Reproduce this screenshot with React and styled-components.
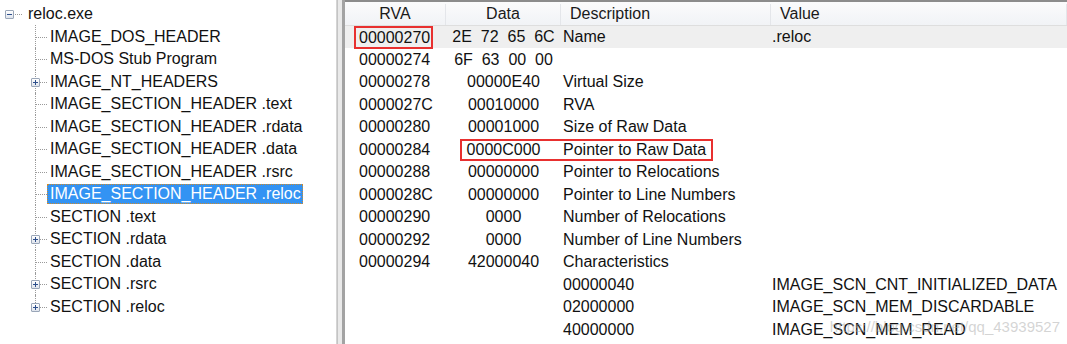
import React from "react";
import styled, { createGlobalStyle, css } from "styled-components";

const GlobalStyle = createGlobalStyle`
  html, body {
    margin: 0;
    padding: 0;
    background: #ffffff;
  }
  body {
    font-family: "Liberation Sans", Arial, sans-serif;
    font-size: 16px;
    color: #111;
  }
`;

const tree = [
  { label: "IMAGE_DOS_HEADER" },
  { label: "MS-DOS Stub Program" },
  { label: "IMAGE_NT_HEADERS", expandable: true },
  { label: "IMAGE_SECTION_HEADER .text" },
  { label: "IMAGE_SECTION_HEADER .rdata" },
  { label: "IMAGE_SECTION_HEADER .data" },
  { label: "IMAGE_SECTION_HEADER .rsrc" },
  { label: "IMAGE_SECTION_HEADER .reloc", selected: true },
  { label: "SECTION .text" },
  { label: "SECTION .rdata", expandable: true },
  { label: "SECTION .data" },
  { label: "SECTION .rsrc", expandable: true },
  { label: "SECTION .reloc", expandable: true },
];

const rows = [
  { rva: "00000270", data: "2E  72  65  6C", desc: "Name", value: ".reloc", current: true, mark: true },
  { rva: "00000274", data: "6F  63  00  00", desc: "", value: "" },
  { rva: "00000278", data: "00000E40", desc: "Virtual Size" },
  { rva: "0000027C", data: "00010000", desc: "RVA" },
  { rva: "00000280", data: "00001000", desc: "Size of Raw Data" },
  { rva: "00000284", data: "0000C000", desc: "Pointer to Raw Data" },
  { rva: "00000288", data: "00000000", desc: "Pointer to Relocations" },
  { rva: "0000028C", data: "00000000", desc: "Pointer to Line Numbers" },
  { rva: "00000290", data: "0000", desc: "Number of Relocations" },
  { rva: "00000292", data: "0000", desc: "Number of Line Numbers" },
  { rva: "00000294", data: "42000040", desc: "Characteristics" },
  { rva: "", data: "", desc: "00000040", value: "IMAGE_SCN_CNT_INITIALIZED_DATA" },
  { rva: "", data: "", desc: "02000000", value: "IMAGE_SCN_MEM_DISCARDABLE" },
  { rva: "", data: "", desc: "40000000", value: "IMAGE_SCN_MEM_READ" },
];

const ROW_H = 22.5;
const COLS = "101px 115px 210px 1fr";

const Window = styled.div`
  display: flex;
  height: 344px;
  width: 1067px;
  overflow: hidden;
  background: #fff;
`;

const TreePane = styled.div`
  width: 337px;
  flex: none;
  border-right: 1px solid #d4d4d4;
  padding: 2.75px 0 0 5px;
  box-sizing: border-box;
`;

const Splitter = styled.div`
  width: 8px;
  flex: none;
  background: #e9e9e9;
  border-left: 1px solid #c4c4c4;
  border-right: 3px solid #a3a3a3;
  box-sizing: border-box;
`;

const Row = styled.div`
  display: flex;
  align-items: center;
  height: ${ROW_H}px;
  white-space: nowrap;
`;

const ExpandBox = styled.span`
  width: 9px;
  height: 9px;
  box-sizing: border-box;
  border: 1px solid #9aa6b8;
  border-radius: 1px;
  background: linear-gradient(#ffffff, #dfe4ec);
  display: flex;
  align-items: center;
  justify-content: center;
  position: relative;
  flex: none;
  &::before {
    content: "";
    width: 5px;
    height: 1px;
    background: #2d4f8c;
  }
  ${(p) =>
    p.plus &&
    css`
      &::after {
        content: "";
        position: absolute;
        width: 1px;
        height: 5px;
        background: #2d4f8c;
      }
    `}
`;

const RootStub = styled.span`
  width: 7px;
  border-top: 1px dotted #9a9a9a;
  margin: 0 3px 0 1px;
`;

const Children = styled.div`
  margin-left: 25px;
`;

const Connector = styled.span`
  width: 17px;
  height: 100%;
  flex: none;
  position: relative;
  display: flex;
  align-items: center;
  &::before {
    content: "";
    position: absolute;
    left: 5px;
    top: 0;
    height: ${(p) => (p.last ? "50%" : "100%")};
    border-left: 1px dotted #9a9a9a;
  }
  &::after {
    content: "";
    position: absolute;
    left: 6px;
    width: 11px;
    top: 50%;
    border-top: 1px dotted #9a9a9a;
  }
  ${ExpandBox} {
    position: absolute;
    left: 1px;
    top: calc(50% - 4px);
    z-index: 1;
  }
`;

const Label = styled.span`
  padding: 1px 2px 1px 3px;
  line-height: 18px;
  ${(p) =>
    p.selected &&
    css`
      background: #3393f3;
      color: #fff;
      outline: 1px dotted #d08a2a;
      outline-offset: -1px;
    `}
`;

const TablePane = styled.div`
  flex: 1;
  display: flex;
  flex-direction: column;
  border-top: 2px solid #8c8c8c;
  position: relative;
`;

const Header = styled.div`
  display: grid;
  grid-template-columns: ${COLS};
  height: 23.75px;
  padding-top: 2px;
  background: linear-gradient(#fbfbfc, #f1f3f6);
  border-bottom: 1px solid #dedede;
  box-sizing: border-box;
`;

const HeadCell = styled.div`
  display: flex;
  align-items: center;
  justify-content: ${(p) => (p.center ? "center" : "flex-start")};
  padding-left: ${(p) => (p.center ? "0" : "9px")};
  border-right: 1px solid #e4e6ea;
  color: #1a1a1a;
`;

const DataRow = styled.div`
  display: grid;
  grid-template-columns: ${COLS};
  height: ${ROW_H}px;
  align-items: center;
  white-space: nowrap;
  background: ${(p) => (p.current ? "#efefef" : "transparent")};
`;

const Cell = styled.div`
  padding-left: ${(p) => p.pad || 0}px;
  text-align: ${(p) => (p.center ? "center" : "left")};
  white-space: pre;
`;

const Marked = styled.span`
  display: inline-block;
  border: 2px solid #e8302f;
  padding: 1px 1px 1px 3px;
  margin-left: -5px;
  line-height: 17px;
`;

const Annotation = styled.div`
  position: absolute;
  border: 2px solid #e8302f;
  box-sizing: border-box;
  pointer-events: none;
`;

const Watermark = styled.div`
  position: absolute;
  right: 7px;
  bottom: 9px;
  font-size: 15px;
  color: rgba(170, 170, 170, 0.5);
  white-space: nowrap;
`;

export default function App() {
  return (
    <>
      <GlobalStyle />
      <Window>
        <TreePane>
          <Row>
            <ExpandBox />
            <RootStub />
            <Label>reloc.exe</Label>
          </Row>
          <Children>
            {tree.map((t, i) => (
              <Row key={t.label}>
                <Connector last={i === tree.length - 1}>
                  {t.expandable && <ExpandBox plus />}
                </Connector>
                <Label selected={t.selected}>{t.label}</Label>
              </Row>
            ))}
          </Children>
        </TreePane>
        <Splitter />
        <TablePane>
          <Header>
            <HeadCell center>RVA</HeadCell>
            <HeadCell center>Data</HeadCell>
            <HeadCell>Description</HeadCell>
            <HeadCell>Value</HeadCell>
          </Header>
          {rows.map((r, i) => (
            <DataRow key={i} current={r.current}>
              <Cell pad={14}>{r.mark ? <Marked>{r.rva}</Marked> : r.rva}</Cell>
              <Cell center>{r.data}</Cell>
              <Cell pad={2}>{r.desc}</Cell>
              <Cell pad={1}>{r.value}</Cell>
            </DataRow>
          ))}
          <Annotation style={{ left: 115, top: 137, width: 253, height: 22 }} />
          <Watermark>https://blog.csdn.net/qq_43939527</Watermark>
        </TablePane>
      </Window>
    </>
  );
}
